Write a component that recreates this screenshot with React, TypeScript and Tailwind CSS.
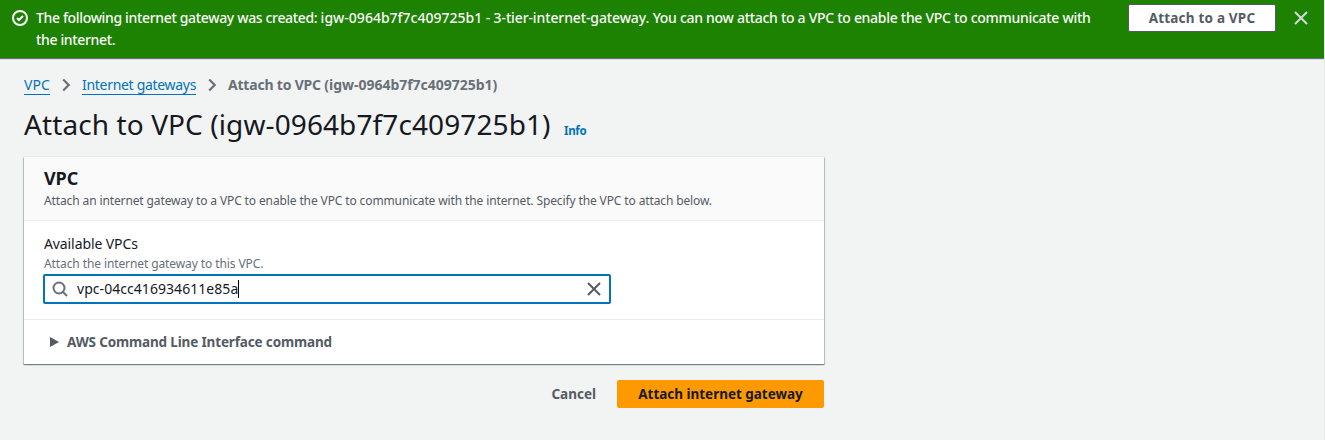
import React from "react";

function CheckIcon() {
  return (
    <svg className="h-4 w-4 shrink-0" viewBox="0 0 16 16" fill="none" stroke="#fff" strokeWidth="2">
      <circle cx="8" cy="8" r="7" />
      <path d="M5 8l2 2 4-4" />
    </svg>
  );
}

function CloseIcon({ color }: { color: string }) {
  return (
    <svg className="h-4 w-4 shrink-0" viewBox="0 0 16 16" fill="none" stroke={color} strokeWidth="2">
      <path d="M2 2l12 12M14 2L2 14" />
    </svg>
  );
}

function SearchIcon() {
  return (
    <svg className="h-4 w-4 shrink-0" viewBox="0 0 16 16" fill="none" stroke="#687078" strokeWidth="2">
      <circle cx="7" cy="7" r="5.5" />
      <path d="M15 15l-4.5-4.5" />
    </svg>
  );
}

function Chevron() {
  return (
    <svg className="h-4 w-4 shrink-0" viewBox="0 0 16 16" fill="none" stroke="#687078" strokeWidth="2.2">
      <path d="M5.2 2.5l5.5 5.5-5.5 5.5" />
    </svg>
  );
}

export default function App() {
  return (
    <div className="h-[440px] w-[1325px] overflow-hidden border-r border-[#e6eaea] bg-[#f2f3f3] font-['Noto_Sans',sans-serif] text-[14px] leading-[22px] text-[#16191f]">
      <header className="flex h-[58px] items-start bg-[#1d8102] pl-3 shadow-[0_1px_1px_0_#687078]">
        <div className="flex h-9 items-end pb-[10px]">
          <CheckIcon />
        </div>
        <p className="ml-2 w-[1092px] whitespace-nowrap pt-[7px] font-medium text-[#fafafa]">
          <span className="tracking-[-0.34px]">The following internet gateway was created: </span>
          <span className="tracking-[0px]">igw-0964b7f7c409725b1</span>
          <span className="tracking-[-0.12px]"> - 3-tier-internet-gateway. </span>
          <span className="tracking-[-0.29px]">You can now attach to a VPC to enable the VPC to communicate with</span>
          <br />
          <span className="tracking-[-0.35px]">the internet.</span>
        </p>
        <button className="mt-1 flex h-7 w-[148px] shrink-0 items-center justify-center rounded-[2px] border border-[#545b64] bg-white text-[13.5px] font-bold text-[#545b64]">
          <span className="whitespace-nowrap tracking-[0.2px]">Attach to a VPC</span>
        </button>
        <button className="ml-[17px] mt-[10px]" aria-label="Close">
          <CloseIcon color="#d5dbdb" />
        </button>
      </header>

      <main className="w-[824px] pl-6">
        <nav className="mt-4 flex h-[22px] items-center whitespace-nowrap text-[#0073bb]">
          <a className="mb-[2px] h-[21px] w-[26px] border-b border-[#0073bb] leading-[21px]">
            <span className="tracking-[0.1px]">VPC</span>
          </a>
          <span className="ml-2 flex"><Chevron /></span>
          <a className="mb-[2px] ml-2 h-[21px] w-[114px] border-b border-[#0073bb] leading-[21px]">
            <span className="tracking-[-0.3px]">Internet gateways</span>
          </a>
          <span className="ml-2 flex"><Chevron /></span>
          <span className="ml-2 font-bold text-[#687078]">
            <span className="tracking-[-0.2px]">Attach to VPC </span>
            <span className="tracking-[-0.02px]">(igw-0964b7f7c409725b1)</span>
          </span>
        </nav>

        <div className="mt-[10px] flex h-9 items-baseline whitespace-nowrap">
          <h1 className="w-[540px] text-[28px] leading-9 tracking-[0.1px]">Attach to VPC (igw-0964b7f7c409725b1)</h1>
          <a className="text-[11.5px] font-bold tracking-[-0.3px] text-[#0073bb]">Info</a>
        </div>

        <section className="mt-[15px] h-[207px] bg-white shadow-[0_1px_1px_0_rgba(0,28,36,0.3),1px_1px_1px_0_rgba(0,28,36,0.15),-1px_1px_1px_0_rgba(0,28,36,0.15),0_0_0_1px_rgba(0,28,36,0.05)]">
          <div className="h-16 whitespace-nowrap border-b border-[#eaeded] bg-[#fafafa] px-5 pt-[10px]">
            <h2 className="text-[18px] font-bold leading-[22px] tracking-[-0.1px]">VPC</h2>
            <p className="mt-[2px] text-xs leading-5 text-[#545b64]">
              <span className="tracking-[-0.12px]">Attach an internet gateway to a VPC to enable the VPC to communicate with the internet. Specify the VPC to attach below.</span>
            </p>
          </div>
          <div className="h-[99px] whitespace-nowrap border-b border-[#eaeded] pl-[19px] pt-3">
            <label className="ml-px block"><span className="tracking-[-0.1px]">Available VPCs</span></label>
            <p className="ml-px mt-px text-xs leading-4 text-[#687078]"><span className="tracking-[-0.1px]">Attach the internet gateway to this VPC.</span></p>
            <div className="mt-[2px] flex h-[30px] w-[568px] items-center rounded-[2px] border-2 border-[#0073bb] bg-white px-[7px]">
              <SearchIcon />
              <span className="ml-[9px] tracking-[0.05px]">vpc-04cc416934611e85a</span>
              <span className="h-[18px] w-px bg-black" />
              <span className="ml-auto flex"><CloseIcon color="#545b64" /></span>
            </div>
          </div>
          <div className="flex h-11 items-center whitespace-nowrap pl-[26px] text-[13.5px] font-bold text-[#545b64]">
            <svg className="h-[10px] w-[9px]" viewBox="0 0 9 10" fill="#545b64"><path d="M0 0l9 5-9 5z" /></svg>
            <span className="ml-2 tracking-[-0.15px]">AWS Command Line Interface command</span>
          </div>
        </section>

        <div className="mt-4 flex h-7 items-center justify-end whitespace-nowrap text-[13.5px] font-bold">
          <button className="mr-[21px] text-[#545b64]"><span className="tracking-[0px]">Cancel</span></button>
          <button className="flex h-7 w-[207px] items-center justify-center rounded-[2px] bg-[#ff9900]"><span className="tracking-[-0.02px]">Attach internet gateway</span></button>
        </div>
      </main>
    </div>
  );
}
